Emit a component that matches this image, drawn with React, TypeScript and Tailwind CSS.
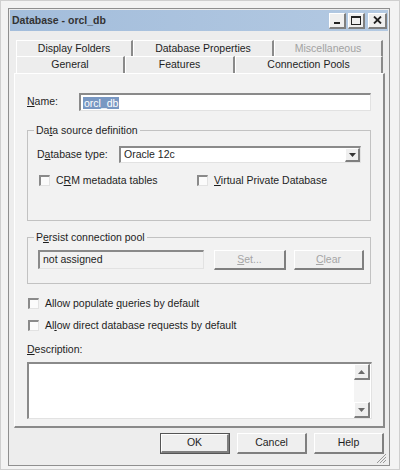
import type { ReactNode } from "react";

const raised =
  "bg-[#efefef] border-t border-l border-t-white border-l-white border-r-2 border-b-2 border-r-[#7f7f7f] border-b-[#7f7f7f]";
const sunken =
  "border-t-2 border-l-2 border-r border-b border-t-[#8a8a8a] border-l-[#8a8a8a] border-r-[#e2e2e2] border-b-[#e2e2e2]";

function U({ children }: { children: ReactNode }) {
  return <span className="underline underline-offset-[1px]">{children}</span>;
}

function Check({ label }: { label: ReactNode }) {
  return (
    <div className="flex items-center h-[13px]">
      <span className={`w-[11px] h-[11px] bg-[#fbfbfb] ${sunken}`} />
      <span className="ml-[6px] leading-[13px]">{label}</span>
    </div>
  );
}

function Tab({ w, children, muted }: { w: string; children: ReactNode; muted?: boolean }) {
  return (
    <div
      className={`${w} h-full flex items-center justify-center border-t border-l border-t-white border-l-white border-r-2 border-r-[#8a8a8a] ${
        muted ? "text-[#a2a2a2]" : ""
      }`}
    >
      {children}
    </div>
  );
}

function Arrow({ up }: { up?: boolean }) {
  return (
    <div className={`w-[16px] h-[16px] flex items-center justify-center ${raised}`}>
      <svg width="7" height="4" viewBox="0 0 7 4">
        <path d={up ? "M0 4 L3.5 0 L7 4 Z" : "M0 0 L3.5 4 L7 0 Z"} fill="#6a6a6a" />
      </svg>
    </div>
  );
}

export default function App() {
  return (
    <div className="w-[400px] h-[470px] bg-[#f3f3f3] border border-[#cfcfcf] pt-[7px] pl-[7px] font-['Liberation_Sans',Arial,sans-serif] text-[10.5px] text-[#1e1e1e]">
      <div className="w-[382px] h-[458px] border border-[#8f8f8f] bg-[#ededed] p-[1px] flex flex-col">
        {/* title bar */}
        <div className="h-[21px] bg-gradient-to-r from-[#a3bddb] to-[#b3c9e2] flex items-center justify-between pl-[2px] pr-[1px]">
          <span className="font-bold text-[10.5px] text-[#333]">Database - orcl_db</span>
          <div className="flex items-center gap-[2px]">
            <div className={`w-[17px] h-[16px] flex items-end justify-center pb-[3px] ${raised}`}>
              <span className="w-[6px] h-[2px] bg-[#222]" />
            </div>
            <div className={`w-[17px] h-[16px] flex items-center justify-center ${raised}`}>
              <span className="w-[10px] h-[9px] border border-[#222] border-t-2" />
            </div>
            <div className={`w-[19px] h-[16px] flex items-center justify-center ml-[1px] ${raised}`}>
              <svg width="9" height="8" viewBox="0 0 9 8">
                <path d="M1 0.5 L8 7.5 M8 0.5 L1 7.5" stroke="#222" strokeWidth="1.8" />
              </svg>
            </div>
          </div>
        </div>

        {/* body */}
        <div className="flex-1 flex flex-col pl-[4px] pr-[3px] pt-[9px]">
          <div className="ml-[2px] flex flex-col">
            <div className="flex h-[16px]">
              <Tab w="w-[117px]">Display Folders</Tab>
              <Tab w="w-[141px]">Database Properties</Tab>
              <Tab w="w-[109px]" muted>
                Miscellaneous
              </Tab>
            </div>
            <div className="flex h-[17px]">
              <Tab w="w-[109px]">General</Tab>
              <Tab w="w-[110px]">Features</Tab>
              <Tab w="w-[148px]">Connection Pools</Tab>
            </div>
          </div>

          {/* panel */}
          <div className="w-[371px] h-[355px] bg-[#f2f2f2] border-t border-l border-t-white border-l-white border-r-2 border-b-2 border-r-[#8a8a8a] border-b-[#8a8a8a] px-[12px] pt-[19px] flex flex-col">
            <div className="flex items-center h-[18px]">
              <span className="w-[52px]">
                <U>N</U>ame:
              </span>
              <div className={`w-[292px] h-[18px] bg-white flex items-center pl-[2px] ${sunken}`}>
                <span className="bg-[#7897c2] text-white px-[1px] leading-[12px]">orcl_db</span>
              </div>
            </div>

            <fieldset className="mt-[13px] h-[97px] border border-[#c2c2c2] min-w-0">
              <legend className="ml-[6px] px-[2px] leading-[13px]">
                Da<U>t</U>a source definition
              </legend>
              <div className="pl-[9px] pt-[9px] flex flex-col">
                <div className="flex items-center h-[17px]">
                  <span className="w-[82px]">
                    D<U>a</U>tabase type:
                  </span>
                  <div className={`w-[242px] h-[17px] bg-white flex items-center justify-between pl-[3px] ${sunken}`}>
                    <span>Oracle 12c</span>
                    <div className={`w-[15px] h-[14px] flex items-center justify-center ${raised}`}>
                      <svg width="7" height="4" viewBox="0 0 7 4">
                        <path d="M0 0 L3.5 4 L7 0 Z" fill="#333" />
                      </svg>
                    </div>
                  </div>
                </div>
                <div className="flex mt-[11px] pl-[2px]">
                  <div className="w-[158px]">
                    <Check
                      label={
                        <>
                          C<U>R</U>M metadata tables
                        </>
                      }
                    />
                  </div>
                  <Check
                    label={
                      <>
                        <U>V</U>irtual Private Database
                      </>
                    }
                  />
                </div>
              </div>
            </fieldset>

            <fieldset className="mt-[10px] h-[53px] border border-[#c2c2c2] min-w-0">
              <legend className="ml-[6px] px-[2px] leading-[13px]">
                P<U>e</U>rsist connection pool
              </legend>
              <div className="flex items-start pl-[10px] pt-[6px]">
                <div className={`w-[166px] h-[19px] bg-[#f2f2f2] flex items-center pl-[3px] ${sunken}`}>
                  not assigned
                </div>
                <div className={`ml-[10px] w-[72px] h-[20px] flex items-center justify-center text-[#a5a5a5] ${raised}`}>
                  <U>S</U>et...
                </div>
                <div className={`ml-[8px] w-[70px] h-[20px] flex items-center justify-center text-[#a5a5a5] ${raised}`}>
                  <U>C</U>lear
                </div>
              </div>
            </fieldset>

            <div className="mt-[13px] ml-[1px]">
              <Check
                label={
                  <>
                    Allow populate <U>q</U>ueries by default
                  </>
                }
              />
            </div>
            <div className="mt-[9px] ml-[1px]">
              <Check
                label={
                  <>
                    Al<U>l</U>ow direct database requests by default
                  </>
                }
              />
            </div>
            <div className="mt-[11px] leading-[13px]">
              <U>D</U>escription:
            </div>
            <div className={`mt-[6px] w-[345px] h-[57px] bg-white flex justify-end ${sunken}`}>
              <div className="w-[16px] h-full flex flex-col justify-between bg-[#f4f4f4] mr-[1px]">
                <Arrow up />
                <Arrow />
              </div>
            </div>
          </div>

          {/* buttons */}
          <div className="flex justify-end gap-[7px] mt-[5px] pr-[1px]">
            <div className="w-[70px] h-[21px] border border-[#555] flex">
              <div className={`flex-1 flex items-center justify-center ${raised}`}>OK</div>
            </div>
            <div className={`w-[70px] h-[21px] flex items-center justify-center ${raised}`}>Cancel</div>
            <div className={`w-[70px] h-[21px] flex items-center justify-center ${raised}`}>Help</div>
          </div>
          <div className="flex justify-end mt-[-1px] mr-[-2px]">
            <svg width="11" height="11" viewBox="0 0 11 11">
              <path d="M10 1 L1 10 M10 4 L4 10 M10 7 L7 10" stroke="#9a9a9a" strokeWidth="1" />
            </svg>
          </div>
        </div>
      </div>
    </div>
  );
}
